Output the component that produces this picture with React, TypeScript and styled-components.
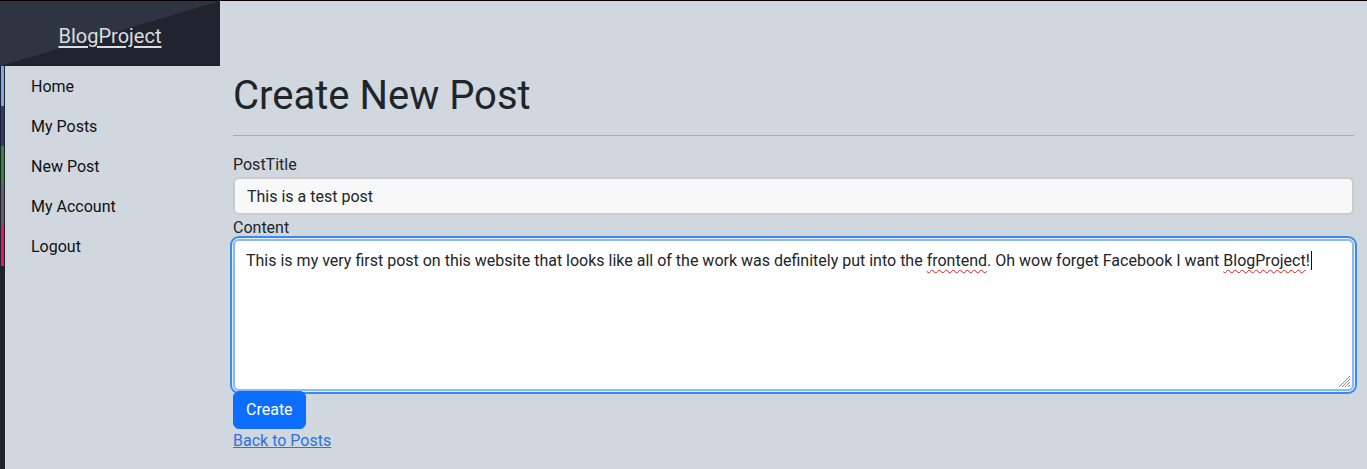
import React from "react";
import styled, { createGlobalStyle } from "styled-components";

const GlobalStyle = createGlobalStyle`
  html, body {
    margin: 0;
    padding: 0;
  }
  body {
    border-top: 1px solid #000;
    background: #d0d7de;
    font-family: Roboto, "Liberation Sans", sans-serif;
    color: #212529;
    font-size: 16px;
    line-height: 1.5;
  }
  * { box-sizing: border-box; }
`;

const Page = styled.div`
  display: flex;
  min-height: 468px;
`;

const Sidebar = styled.aside`
  width: 220px;
  flex: 0 0 220px;
  display: flex;
  flex-direction: column;
`;

const Brand = styled.div`
  height: 65px;
  display: flex;
  align-items: center;
  justify-content: center;
  padding-top: 5px;
  background: linear-gradient(to bottom right, #2e3440 50%, #21242f 50%);
`;

const BrandLink = styled.a`
  color: #dadde2;
  font-size: 20px;
  line-height: 30px;
  text-decoration: underline;
  text-underline-offset: 3px;
  cursor: pointer;
`;

const NavList = styled.nav`
  flex: 1;
  display: flex;
  flex-direction: column;
  background: #d0d7de;
  box-shadow: inset 5px 0 0 #1f222b;
`;

const NavItem = styled.a`
  display: flex;
  align-items: stretch;
  height: 40px;
  padding-left: 1px;
  color: #111;
  text-decoration: none;
  font-size: 16px;
  cursor: pointer;
`;

const Marker = styled.span<{ $color: string }>`
  width: 3px;
  background: ${(p) => p.$color};
`;

const NavLabel = styled.span`
  display: flex;
  align-items: center;
  margin-left: 27px;
  padding-top: 1px;
`;

const Main = styled.main`
  flex: 1;
  padding: 71px 13px 0 13px;
  display: flex;
  flex-direction: column;
  align-items: flex-start;
`;

const Title = styled.h1`
  margin: 0 0 15px;
  font-size: 40px;
  font-weight: 400;
  line-height: 1.2;
  color: #212529;
`;

const Rule = styled.hr`
  align-self: stretch;
  margin: 0 0 17px;
  border: 0;
  border-top: 1px solid #a6abb0;
`;

const Form = styled.form`
  align-self: stretch;
  display: flex;
  flex-direction: column;
  align-items: flex-start;
`;

const Label = styled.label`
  font-size: 16px;
  line-height: 24px;
  color: #212529;
`;

const TextInput = styled.input`
  align-self: stretch;
  height: 38px;
  margin-bottom: 1px;
  padding: 6px 12px;
  border: 2px solid #c9cbcd;
  border-radius: 6px;
  background: #f8f8f8;
  font-family: Roboto, "Liberation Sans", sans-serif;
  font-size: 16px;
  color: #212529;
  outline: none;
`;

const EditorBox = styled.div`
  position: relative;
  align-self: stretch;
  height: 152px;
  margin-top: -1px;
  padding: 8px 11px;
  border: 2px solid #8ab8f8;
  border-radius: 6px;
  background: #fff;
  box-shadow: 0 0 0 1px #e3edfb, 0 0 0 3px #3a8ce8;
  font-size: 16px;
  line-height: 24px;
  color: #212529;
`;

const Misspelled = styled.span`
  text-decoration: underline wavy #e01b1b;
  text-decoration-thickness: 1px;
  text-underline-offset: 3px;
`;

const Caret = styled.span`
  display: inline-block;
  width: 1px;
  height: 19px;
  margin-left: 1px;
  vertical-align: -4px;
  background: #111;
`;

const Grip = styled.svg`
  position: absolute;
  right: 1px;
  bottom: 1px;
`;

const SubmitButton = styled.button`
  height: 38px;
  padding: 6px 12px;
  border: 1px solid #0d6efd;
  border-radius: 6px;
  background: #0d6efd;
  color: #fff;
  font-family: Roboto, "Liberation Sans", sans-serif;
  font-size: 16px;
  line-height: 24px;
  cursor: pointer;
  position: relative;
`;

const BackLink = styled.a`
  font-size: 16px;
  line-height: 24px;
  color: #2a72e6;
  text-decoration: underline;
  cursor: pointer;
`;

const navItems = [
  { label: "Home", color: "#7aaaf2" },
  { label: "My Posts", color: "#2c3a7c" },
  { label: "New Post", color: "#2f8a3c" },
  { label: "My Account", color: "#675a6c" },
  { label: "Logout", color: "#e21d5c" },
];

export default function App() {
  return (
    <>
      <GlobalStyle />
      <Page>
        <Sidebar>
          <Brand>
            <BrandLink>BlogProject</BrandLink>
          </Brand>
          <NavList>
            {navItems.map((n) => (
              <NavItem key={n.label}>
                <Marker $color={n.color} />
                <NavLabel>{n.label}</NavLabel>
              </NavItem>
            ))}
          </NavList>
        </Sidebar>
        <Main>
          <Title>Create New Post</Title>
          <Rule />
          <Form onSubmit={(e) => e.preventDefault()}>
            <Label htmlFor="title">PostTitle</Label>
            <TextInput id="title" defaultValue="This is a test post" />
            <Label>Content</Label>
            <EditorBox>
              This is my very first post on this website that looks like all of the work was
              definitely put into the <Misspelled>frontend</Misspelled>. Oh wow forget Facebook I
              want <Misspelled>BlogProject</Misspelled>!<Caret />
              <Grip width="14" height="14" viewBox="0 0 14 14">
                <line x1="13" y1="2" x2="2" y2="13" stroke="#8a8a8a" strokeWidth="1" />
                <line x1="13" y1="5" x2="5" y2="13" stroke="#8a8a8a" strokeWidth="1" />
                <line x1="13" y1="8" x2="8" y2="13" stroke="#8a8a8a" strokeWidth="1" />
                <line x1="13" y1="11" x2="11" y2="13" stroke="#8a8a8a" strokeWidth="1" />
              </Grip>
            </EditorBox>
            <SubmitButton type="submit">Create</SubmitButton>
            <BackLink>Back to Posts</BackLink>
          </Form>
        </Main>
      </Page>
    </>
  );
}
